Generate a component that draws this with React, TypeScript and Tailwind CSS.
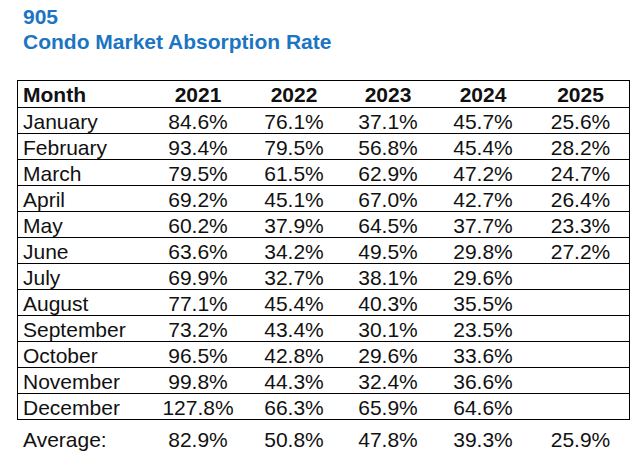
import React from "react";

const rows: [string, string, string, string, string, string][] = [
  ["January", "84.6%", "76.1%", "37.1%", "45.7%", "25.6%"],
  ["February", "93.4%", "79.5%", "56.8%", "45.4%", "28.2%"],
  ["March", "79.5%", "61.5%", "62.9%", "47.2%", "24.7%"],
  ["April", "69.2%", "45.1%", "67.0%", "42.7%", "26.4%"],
  ["May", "60.2%", "37.9%", "64.5%", "37.7%", "23.3%"],
  ["June", "63.6%", "34.2%", "49.5%", "29.8%", "27.2%"],
  ["July", "69.9%", "32.7%", "38.1%", "29.6%", ""],
  ["August", "77.1%", "45.4%", "40.3%", "35.5%", ""],
  ["September", "73.2%", "43.4%", "30.1%", "23.5%", ""],
  ["October", "96.5%", "42.8%", "29.6%", "33.6%", ""],
  ["November", "99.8%", "44.3%", "32.4%", "36.6%", ""],
  ["December", "127.8%", "66.3%", "65.9%", "64.6%", ""],
];

const colWidths = ["w-[96px]", "w-[96px]", "w-[92px]", "w-[98px]", "w-[97px]"];

function Cells({ cells }: { cells: string[] }) {
  return (
    <>
      <div className="w-[132px] pl-[5px] whitespace-nowrap">{cells[0]}</div>
      {cells.slice(1).map((c, i) => (
        <div key={i} className={`${colWidths[i]} text-center whitespace-nowrap`}>
          {c}
        </div>
      ))}
    </>
  );
}

export default function App() {
  return (
    <div
      className="w-[638px] h-[458px] bg-white text-[#111] overflow-hidden"
      style={{ fontFamily: '"Liberation Sans", Arial, sans-serif' }}
    >
      <div className="pt-[4px] pl-[23px] text-[21px] leading-[25px] font-bold text-[#1c75c2]">
        <div>905</div>
        <div>Condo Market Absorption Rate</div>
      </div>

      <div className="mt-[26px] ml-[17px] w-[613px] border border-black text-[21px]">
        <div className="flex h-[26px] pt-[1px] leading-[25px] font-bold">
          <Cells cells={["Month", "2021", "2022", "2023", "2024", "2025"]} />
        </div>
        {rows.map((r) => (
          <div key={r[0]} className="flex h-[26px] border-t border-black pt-[3px] leading-[22px]">
            <Cells cells={r} />
          </div>
        ))}
      </div>

      <div className="mt-[8px] ml-[17px] w-[613px] px-[1px] flex text-[21px] leading-[23px]">
        <Cells cells={["Average:", "82.9%", "50.8%", "47.8%", "39.3%", "25.9%"]} />
      </div>
    </div>
  );
}
